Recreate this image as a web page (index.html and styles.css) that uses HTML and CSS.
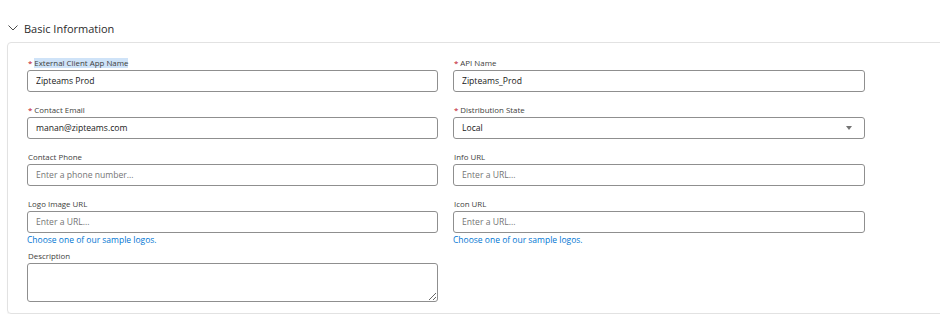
FILE: index.html
```html
<!DOCTYPE html>
<html lang="en">
<head>
    <meta charset="UTF-8">
    <meta name="viewport" content="width=device-width, initial-scale=1.0">
    <title>Basic Information</title>
    <link rel="stylesheet" href="styles.css">
</head>
<body>
    <div class="section">
        <div class="section-header">
            <svg class="chevron" width="10" height="6" viewBox="0 0 10 6">
                <polyline points="0.5,0.5 5,5 9.5,0.5" fill="none" stroke="#4a4a4a" stroke-width="1"/>
            </svg>
            <span class="section-title">Basic Information</span>
        </div>

        <div class="card">
            <div class="form-grid">
                <div class="field">
                    <label class="field-label"><span class="req">*</span><span class="selected">External Client App Name</span></label>
                    <input class="field-input" type="text" value="Zipteams Prod">
                </div>
                <div class="field">
                    <label class="field-label"><span class="req">*</span>API Name</label>
                    <input class="field-input" type="text" value="Zipteams_Prod">
                </div>

                <div class="field">
                    <label class="field-label"><span class="req">*</span>Contact Email</label>
                    <input class="field-input" type="text" value="manan@zipteams.com">
                </div>
                <div class="field">
                    <label class="field-label"><span class="req">*</span>Distribution State</label>
                    <div class="select-box">
                        <span>Local</span>
                        <span class="caret"></span>
                    </div>
                </div>

                <div class="field">
                    <label class="field-label">Contact Phone</label>
                    <input class="field-input" type="text" placeholder="Enter a phone number...">
                </div>
                <div class="field">
                    <label class="field-label">Info URL</label>
                    <input class="field-input" type="text" placeholder="Enter a URL...">
                </div>

                <div class="field has-link">
                    <label class="field-label">Logo Image URL</label>
                    <input class="field-input" type="text" placeholder="Enter a URL...">
                    <a class="help-link" href="#">Choose one of our sample logos.</a>
                </div>
                <div class="field has-link">
                    <label class="field-label">Icon URL</label>
                    <input class="field-input" type="text" placeholder="Enter a URL...">
                    <a class="help-link" href="#">Choose one of our sample logos.</a>
                </div>

                <div class="field last">
                    <label class="field-label">Description</label>
                    <textarea class="field-textarea"></textarea>
                </div>
            </div>
        </div>
    </div>
</body>
</html>
```

FILE: styles.css
```css
:root {
    --text-color: #181818;
    --label-color: #3e3e3c;
    --placeholder-color: #747474;
    --border-color: #8f8f8f;
    --card-border: #e2e2e2;
    --link-color: #0176d3;
    --required-color: #ba0517;
}

body {
    font-family: "Open Sans", "Noto Sans", sans-serif;
    margin: 0;
    padding: 0;
    background: white;
    color: var(--text-color);
    overflow: hidden;
}

.section {
    padding-top: 18px;
}

.section-header {
    display: flex;
    align-items: center;
    height: 20px;
    padding-left: 8px;
}

.chevron {
    margin-right: 6px;
}

.section-title {
    font-size: 11px;
    color: #2b2b2b;
}

.card {
    margin: 4px -20px 0 7px;
    border: 1px solid var(--card-border);
    border-radius: 4px;
    box-shadow: 0 1px 1px rgba(0,0,0,0.06);
    padding: 14px 0 11px 19px;
}

.form-grid {
    display: grid;
    grid-template-columns: 411px 412px;
    column-gap: 15px;
}

.field {
    display: flex;
    flex-direction: column;
    padding-bottom: 12px;
}

.field.has-link {
    padding-bottom: 3px;
}

.field.last {
    padding-bottom: 0;
}

.field-label {
    font-size: 7.9px;
    line-height: 13px;
    height: 13px;
    color: var(--label-color);
    padding-left: 1px;
}

.req {
    color: var(--required-color);
    margin-right: 2px;
}

.selected {
    background: #cfe3f8;
}

.field-input,
.select-box,
.field-textarea {
    box-sizing: border-box;
    width: 100%;
    height: 22px;
    border: 1px solid var(--border-color);
    border-radius: 3px;
    padding: 0 8px;
    font-family: inherit;
    font-size: 8.6px;
    color: var(--text-color);
    background: white;
    margin: 0;
    outline: none;
}

.field-input::placeholder {
    color: var(--placeholder-color);
}

.select-box {
    display: flex;
    align-items: center;
    justify-content: space-between;
}

.caret {
    width: 0;
    height: 0;
    border-left: 3.5px solid transparent;
    border-right: 3.5px solid transparent;
    border-top: 4px solid #747474;
    margin-right: 4px;
}

.field-textarea {
    height: 39px;
    padding: 4px 8px;
    resize: vertical;
}

.help-link {
    font-size: 8.5px;
    line-height: 14px;
    color: var(--link-color);
    text-decoration: none;
}
```
